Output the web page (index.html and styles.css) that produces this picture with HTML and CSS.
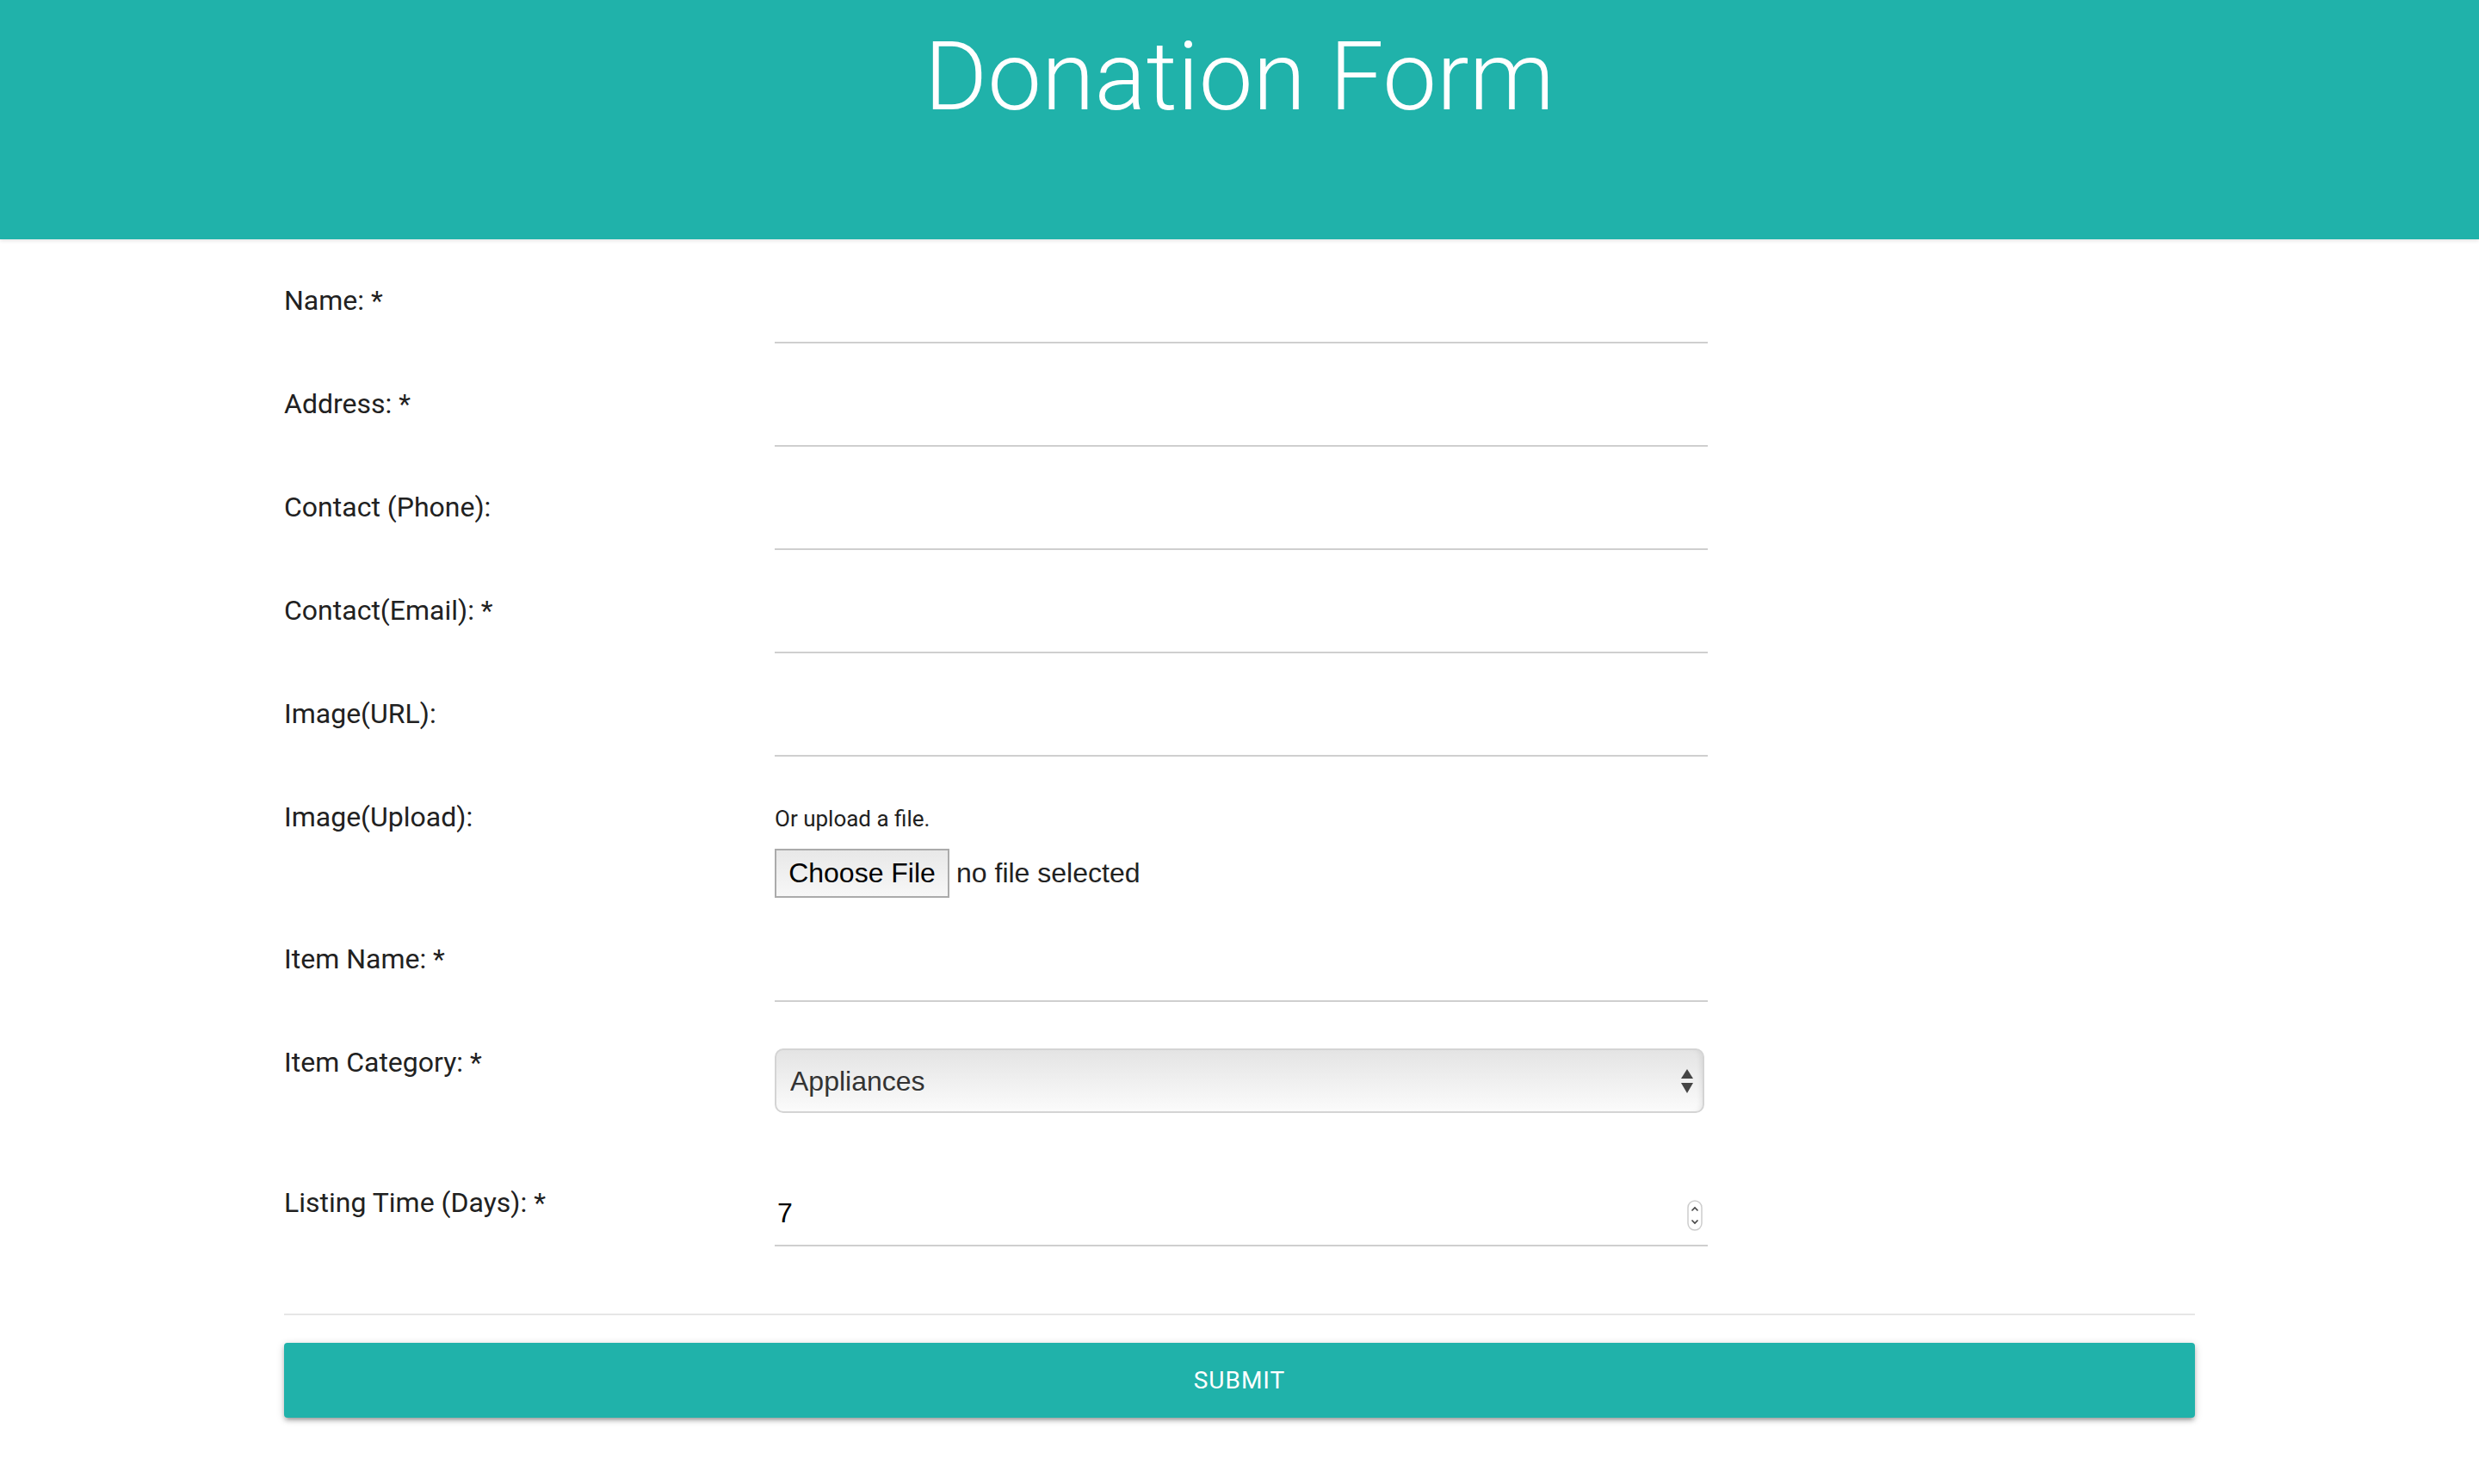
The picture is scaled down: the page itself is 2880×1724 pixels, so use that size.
FILE: index.html
```html
<!DOCTYPE html>
<html lang="en">
<head>
    <meta charset="UTF-8">
    <meta name="viewport" content="width=device-width, initial-scale=1.0">
    <title>Donation Form</title>
    <link rel="stylesheet" href="styles.css">
</head>
<body>
    <header class="banner">
        <h1>Donation Form</h1>
    </header>
    <main class="form-wrap">
        <form class="donation-form">
            <div class="form-row">
                <label class="form-label" for="name">Name: *</label>
                <input class="text-input" id="name" type="text">
            </div>
            <div class="form-row">
                <label class="form-label" for="address">Address: *</label>
                <input class="text-input" id="address" type="text">
            </div>
            <div class="form-row">
                <label class="form-label" for="phone">Contact (Phone):</label>
                <input class="text-input" id="phone" type="text">
            </div>
            <div class="form-row">
                <label class="form-label" for="email">Contact(Email): *</label>
                <input class="text-input" id="email" type="text">
            </div>
            <div class="form-row">
                <label class="form-label" for="imageUrl">Image(URL):</label>
                <input class="text-input" id="imageUrl" type="text">
            </div>
            <div class="form-row">
                <label class="form-label">Image(Upload):</label>
                <div class="upload-field">
                    <p class="upload-hint">Or upload a file.</p>
                    <div class="file-picker">
                        <button class="file-button" type="button">Choose File</button>
                        <span class="file-status">no file selected</span>
                    </div>
                </div>
            </div>
            <div class="form-row">
                <label class="form-label" for="itemName">Item Name: *</label>
                <input class="text-input" id="itemName" type="text">
            </div>
            <div class="form-row">
                <label class="form-label" for="category">Item Category: *</label>
                <div class="select-box">
                    <select id="category">
                        <option>Appliances</option>
                        <option>Books</option>
                        <option>Clothing</option>
                        <option>Furniture</option>
                        <option>Other</option>
                    </select>
                    <svg class="select-arrows" width="14" height="28" viewBox="0 0 14 28">
                        <polygon points="0,11 7,0 14,11" fill="#444"/>
                        <polygon points="0,16 14,16 7,28" fill="#444"/>
                    </svg>
                </div>
            </div>
            <div class="form-row last-row">
                <label class="form-label" for="days">Listing Time (Days): *</label>
                <div class="number-field">
                    <input class="number-input" id="days" type="text" value="7">
                    <svg class="spinner" width="18" height="36" viewBox="0 0 18 36">
                        <rect x="1" y="1" width="16" height="34" rx="8" fill="#fff" stroke="#cdcdcd" stroke-width="1.5"/>
                        <path d="M5.5 12.5 L9 9 L12.5 12.5" fill="none" stroke="#444" stroke-width="1.6"/>
                        <path d="M5.5 23.5 L9 27 L12.5 23.5" fill="none" stroke="#444" stroke-width="1.6"/>
                    </svg>
                </div>
            </div>
            <hr class="divider">
            <button class="submit-button" type="submit">Submit</button>
        </form>
    </main>
</body>
</html>
```

FILE: styles.css
```css
* {
    box-sizing: border-box;
}

body {
    margin: 0;
    font-family: Roboto, "Liberation Sans", sans-serif;
    color: #212121;
    background: #fff;
}

.banner {
    height: 278px;
    background: #20b2aa;
    overflow: hidden;
    box-shadow: 0 2px 4px rgba(0, 0, 0, 0.1);
}

.banner h1 {
    margin: 27px 0 0;
    font-size: 112px;
    font-weight: 300;
    line-height: 1.1;
    color: #fff;
    text-align: center;
}

.form-wrap {
    padding: 51px 330px 80px;
}

.form-row {
    display: grid;
    grid-template-columns: 570px 1084px;
    align-items: start;
    margin-bottom: 50px;
}

.form-row.last-row {
    margin-bottom: 0;
}

.form-label {
    font-size: 32px;
    line-height: 40px;
    color: #212121;
}

.text-input {
    display: block;
    width: 100%;
    height: 70px;
    padding: 0;
    border: 0;
    border-bottom: 2px solid #cfcfcf;
    background: transparent;
    font-family: inherit;
    font-size: 32px;
    outline: none;
}

.upload-field {
    padding-bottom: 1px;
}

.upload-hint {
    margin: 0;
    font-size: 26px;
    line-height: 44px;
    color: #212121;
}

.file-picker {
    display: flex;
    align-items: center;
    gap: 8px;
    margin-top: 13px;
}

.file-button {
    height: 57px;
    width: 203px;
    padding: 0;
    border: 2px solid #ababab;
    background: linear-gradient(#e8e8e8, #f7f7f7);
    font-family: "Liberation Sans", Arial, sans-serif;
    font-size: 32px;
    color: #000;
}

.file-status {
    font-family: "Liberation Sans", Arial, sans-serif;
    font-size: 32px;
    color: #222;
}

.select-box {
    display: flex;
    align-items: center;
    width: 1080px;
    height: 75px;
    margin: 4px 0 34px;
    padding: 0 11px 0 16px;
    border: 2px solid #d4d4d4;
    border-radius: 10px;
    background: linear-gradient(#e4e4e4, #fbfbfb);
    box-shadow: inset -6px 0 6px -4px rgba(0, 0, 0, 0.08);
}

.select-box select {
    flex: 1;
    appearance: none;
    -webkit-appearance: none;
    border: 0;
    padding: 0;
    background: transparent;
    font-family: "Liberation Sans", Arial, sans-serif;
    font-size: 32px;
    color: #333;
    outline: none;
}

.number-field {
    display: flex;
    align-items: center;
    height: 71px;
    padding: 0 6px 0 0;
    border-bottom: 2px solid #cfcfcf;
}

.number-input {
    flex: 1;
    border: 0;
    padding: 0 0 5px 3px;
    background: transparent;
    font-family: "Liberation Sans", Arial, sans-serif;
    font-size: 32px;
    color: #000;
    outline: none;
}

.divider {
    height: 2px;
    margin: 78px 0 32px;
    border: 0;
    background: #e6e6e6;
}

.submit-button {
    display: block;
    width: 100%;
    height: 87px;
    border: 0;
    border-radius: 4px;
    background: #20b2aa;
    color: #fff;
    font-family: Roboto, sans-serif;
    font-size: 28px;
    letter-spacing: 1px;
    text-transform: uppercase;
    box-shadow: 0 4px 4px 0 rgba(0, 0, 0, 0.14), 0 6px 2px -4px rgba(0, 0, 0, 0.12), 0 2px 10px 0 rgba(0, 0, 0, 0.2);
}
```
